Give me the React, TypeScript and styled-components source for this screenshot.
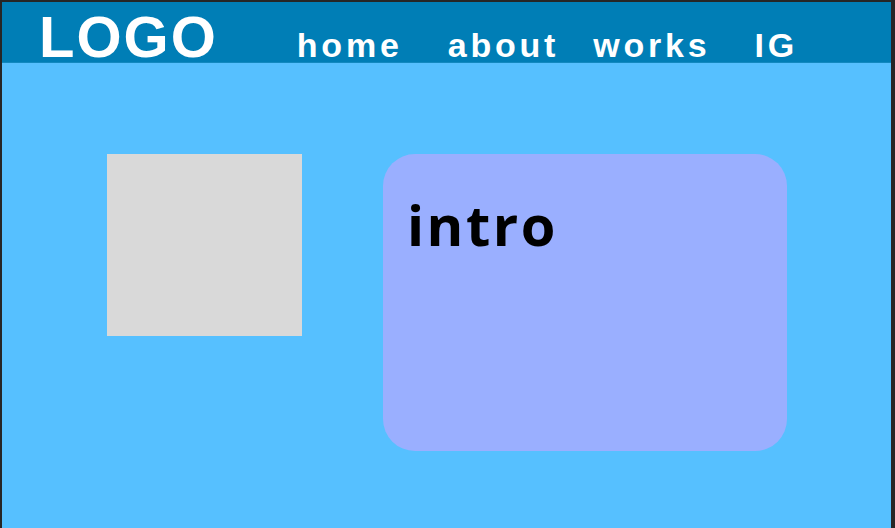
import styled, { createGlobalStyle } from "styled-components";

const GlobalStyle = createGlobalStyle`
  html, body {
    margin: 0;
    padding: 0;
    background: #262626;
  }
  body {
    font-family: "Liberation Sans", Arial, sans-serif;
  }
`;

const Frame = styled.div`
  margin: 2px 4px 0 2px;
  height: 526px;
  display: flex;
  flex-direction: column;
  background: #56c0ff;
  overflow: hidden;
`;

const Header = styled.header`
  height: 61px;
  flex-shrink: 0;
  display: flex;
  align-items: baseline;
  padding: 6px 0 0 37px;
  box-sizing: border-box;
  background: #007eb6;
  border-bottom: 1px solid #1289c0;
`;

const Logo = styled.div`
  color: #ffffff;
  font-weight: 700;
  font-size: 58px;
  line-height: 1;
  letter-spacing: 2px;
`;

const Nav = styled.nav`
  display: flex;
  align-items: baseline;
  margin-left: 79px;
`;

const NavLink = styled.a<{ $offset: number }>`
  margin-left: ${(p) => p.$offset}px;
  color: #ffffff;
  font-weight: 700;
  font-size: 34px;
  line-height: 1;
  letter-spacing: 3.8px;
  text-decoration: none;
`;

const Main = styled.main`
  flex: 1;
  display: flex;
  align-items: flex-start;
  gap: 81px;
  padding: 91px 0 0 105px;
`;

const Photo = styled.div`
  width: 195px;
  height: 182px;
  background: #d9d9d9;
`;

const IntroCard = styled.section`
  width: 404px;
  height: 297px;
  box-sizing: border-box;
  padding: 42px 0 0 24px;
  border-radius: 32px;
  background: #9aafff;
`;

const IntroTitle = styled.h1`
  margin: 0;
  color: #000000;
  font-family: "Open Sans", "Noto Sans", sans-serif;
  font-weight: 700;
  font-size: 56px;
  line-height: 1;
  letter-spacing: 2.5px;
`;

const links = [
  { label: "home", offset: 0 },
  { label: "about", offset: 45 },
  { label: "works", offset: 34 },
  { label: "IG", offset: 44 },
];

export default function App() {
  return (
    <>
      <GlobalStyle />
      <Frame>
        <Header>
          <Logo>LOGO</Logo>
          <Nav>
            {links.map((l) => (
              <NavLink key={l.label} href="#" $offset={l.offset}>
                {l.label}
              </NavLink>
            ))}
          </Nav>
        </Header>
        <Main>
          <Photo />
          <IntroCard>
            <IntroTitle>intro</IntroTitle>
          </IntroCard>
        </Main>
      </Frame>
    </>
  );
}
